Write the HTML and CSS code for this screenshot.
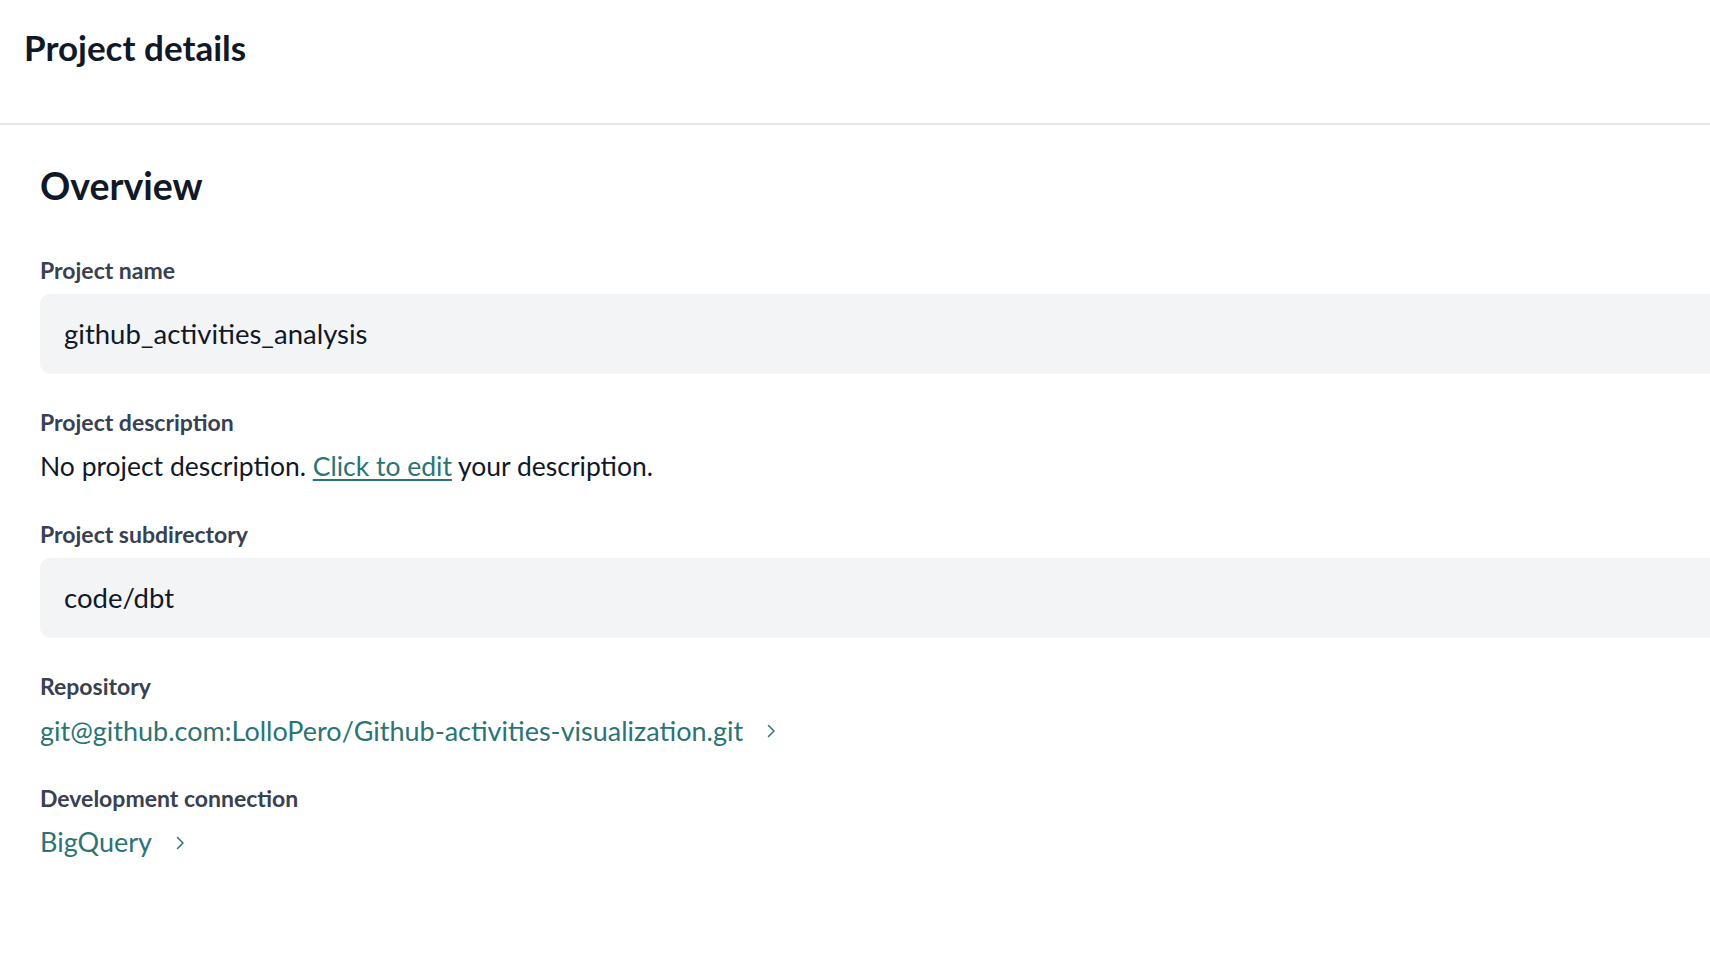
FILE: index.html
```html
<!DOCTYPE html>
<html lang="en">
<head>
<meta charset="utf-8">
<title>Project details</title>
<link rel="stylesheet" href="styles.css">
</head>
<body>
<header class="page-header">
  <h1 class="page-title">Project details</h1>
</header>
<main class="content">
  <h2 class="section-title">Overview</h2>
  <div class="fields">
    <div class="field">
      <div class="field-label">Project name</div>
      <div class="field-input">github_activities_analysis</div>
    </div>
    <div class="field">
      <div class="field-label">Project description</div>
      <div class="field-text description">No project description. <a class="inline-link" href="#">Click to edit</a> your description.</div>
    </div>
    <div class="field">
      <div class="field-label">Project subdirectory</div>
      <div class="field-input">code/dbt</div>
    </div>
    <div class="field">
      <div class="field-label">Repository</div>
      <div class="field-text link-row"><a class="nav-link" href="#">git@github.com:LolloPero/Github-activities-visualization.git<svg class="chevron" viewBox="0 0 10 14" width="10" height="14"><polyline points="2.5,1.5 8,7 2.5,12.5" fill="none" stroke="currentColor" stroke-width="1.5" stroke-linecap="round" stroke-linejoin="round"/></svg></a></div>
    </div>
    <div class="field">
      <div class="field-label">Development connection</div>
      <div class="field-text link-row"><a class="nav-link" href="#">BigQuery<svg class="chevron" viewBox="0 0 10 14" width="10" height="14"><polyline points="2.5,1.5 8,7 2.5,12.5" fill="none" stroke="currentColor" stroke-width="1.5" stroke-linecap="round" stroke-linejoin="round"/></svg></a></div>
    </div>
  </div>
</main>
</body>
</html>
```

FILE: styles.css
```css
html, body {
  margin: 0;
  padding: 0;
  background: #ffffff;
}

body {
  font-family: "Lato", "Noto Sans", sans-serif;
  color: #111827;
  overflow: hidden;
  width: 1710px;
  height: 962px;
}

.page-header {
  box-sizing: border-box;
  height: 125px;
  padding: 27px 0 0 24px;
  border-bottom: 2px solid #e5e7eb;
}

.page-title {
  margin: 0;
  font-size: 35px;
  line-height: 40px;
  font-weight: 700;
  color: #111827;
}

.content {
  padding: 39px 0 0 40px;
}

.section-title {
  margin: 0 0 48.5px 0;
  font-size: 37.5px;
  line-height: 44px;
  font-weight: 700;
  color: #111827;
}

.fields {
  display: flex;
  flex-direction: column;
  gap: 35px;
}

.field {
  display: flex;
  flex-direction: column;
}

.field-label {
  font-size: 23px;
  line-height: 26px;
  font-weight: 700;
  color: #374151;
  margin-bottom: 11px;
}

.field-input {
  height: 80px;
  line-height: 80px;
  font-size: 27.5px;
  padding-left: 24px;
  margin-right: -30px;
  background: #f3f4f6;
  border-radius: 10px;
  color: #111827;
}

.field-text {
  margin-top: 1.5px;
  font-size: 27px;
  line-height: 39px;
  color: #111827;
}

.field-text.description {
  font-size: 26.5px;
}

.field-text.link-row {
  margin-top: 0.5px;
}

.inline-link {
  color: #2c7474;
  text-decoration: underline;
  text-decoration-thickness: 1.5px;
  text-underline-offset: 3px;
}

.nav-link {
  color: #2c7474;
  text-decoration: none;
  display: inline-flex;
  align-items: center;
}

.chevron {
  margin-left: 23px;
  margin-top: 2px;
}
```
